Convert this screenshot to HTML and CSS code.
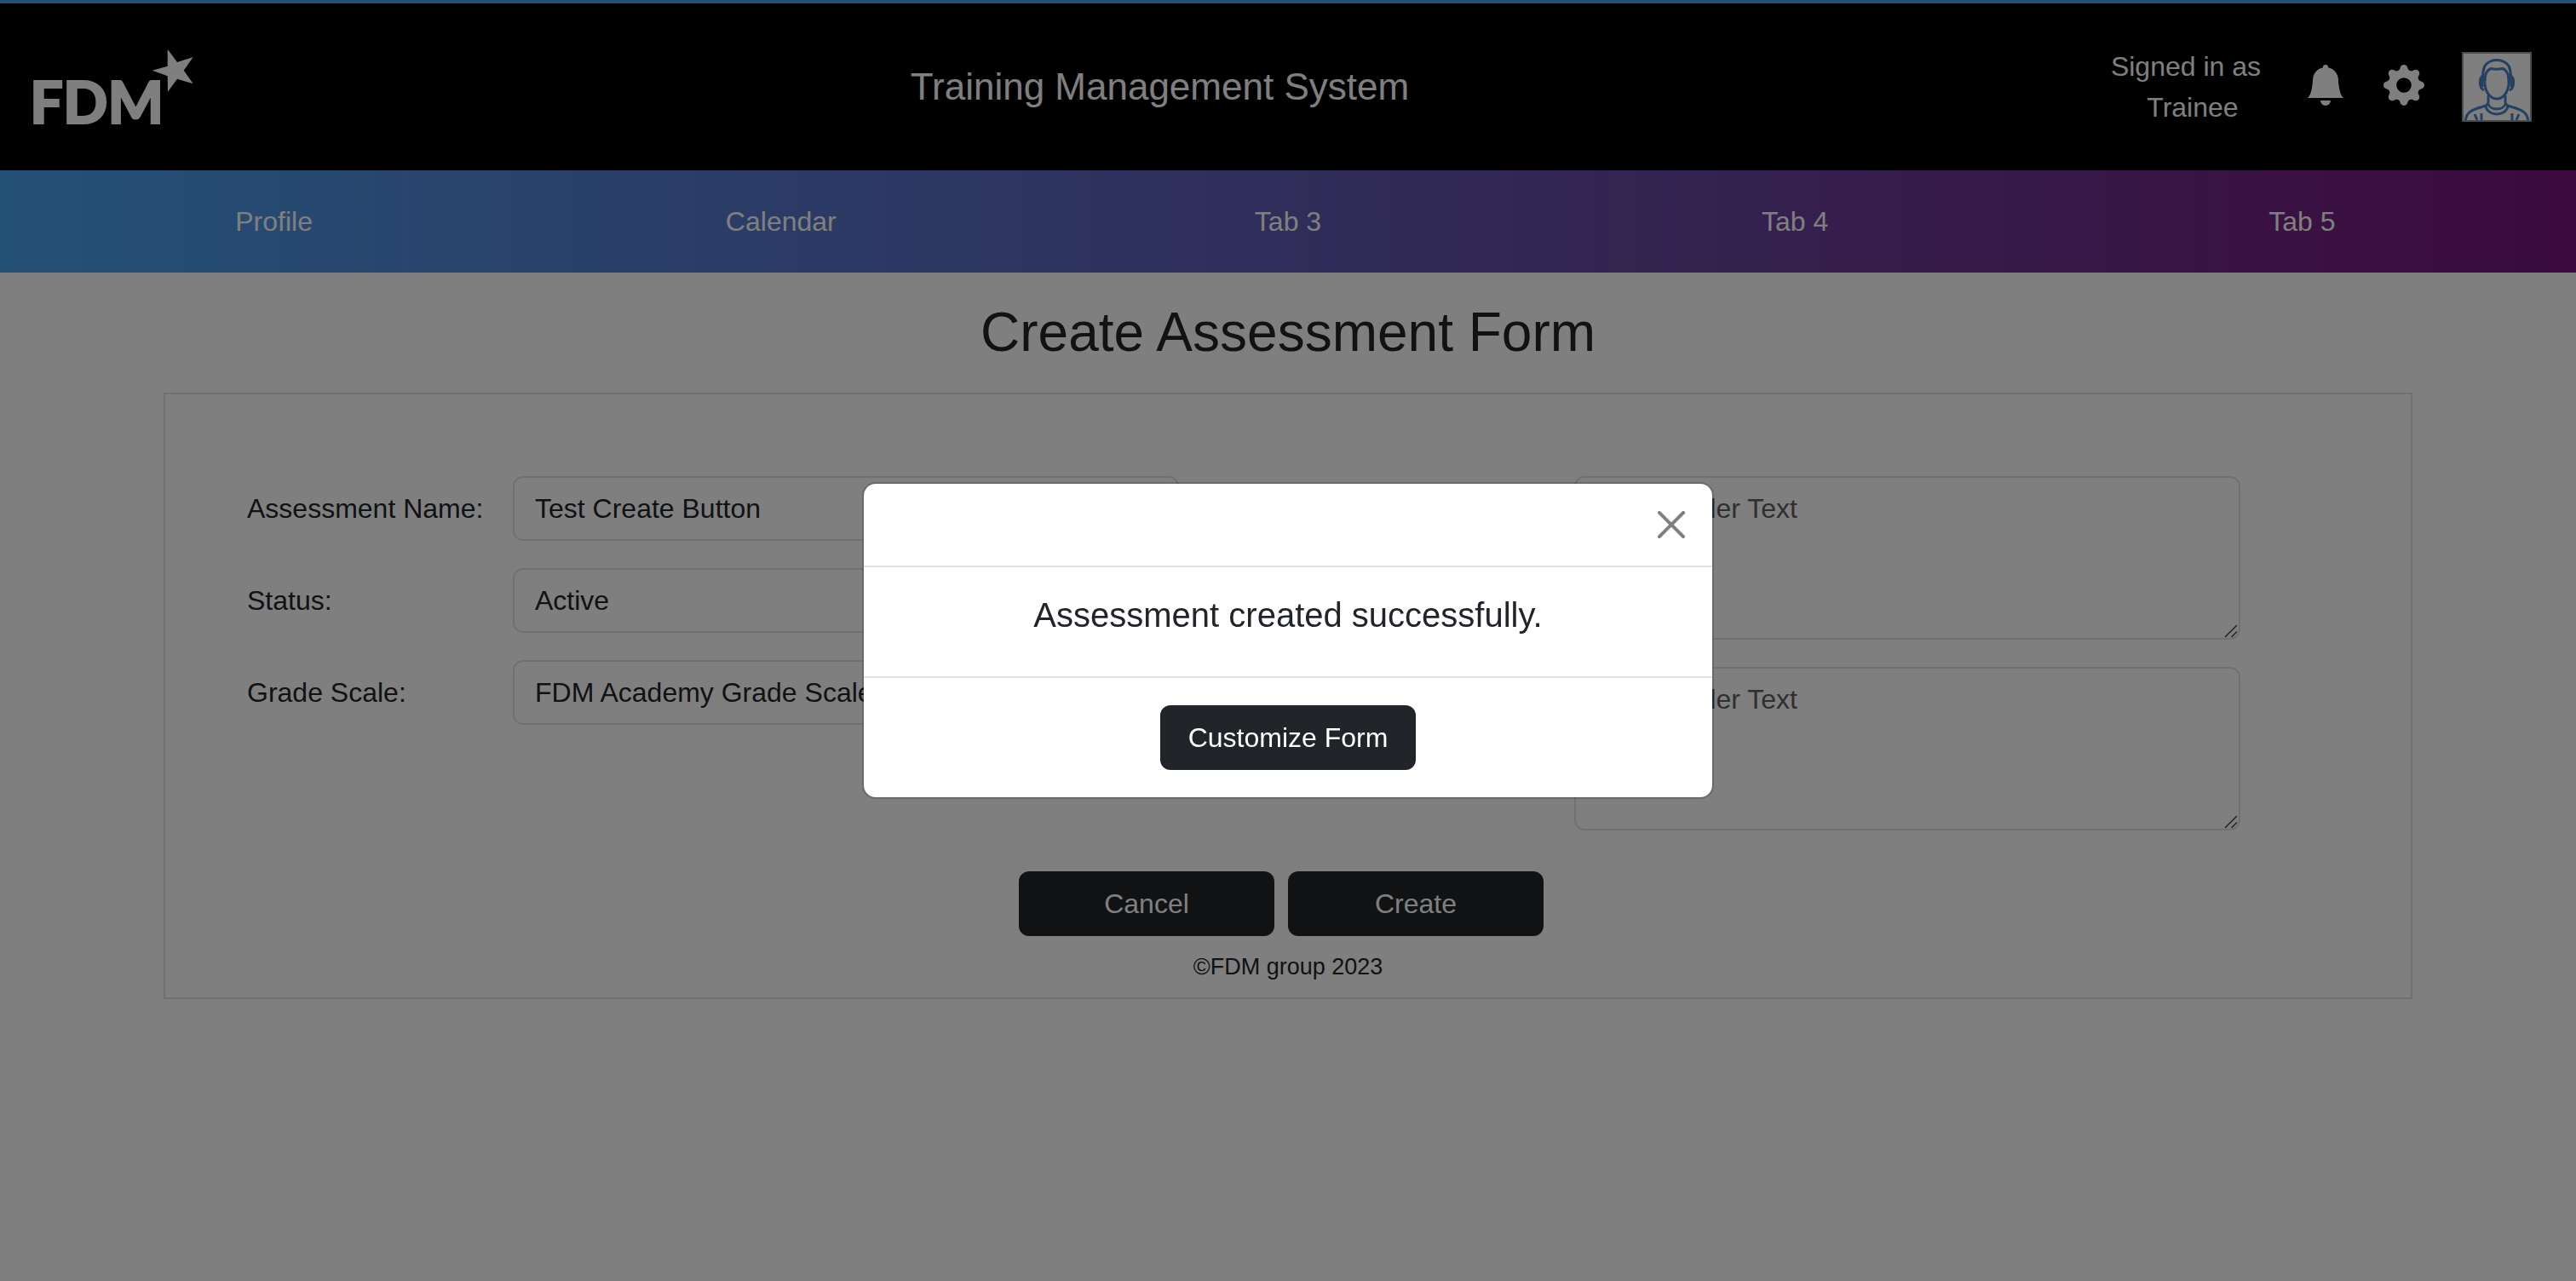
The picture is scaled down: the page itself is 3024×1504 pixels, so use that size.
FILE: index.html
```html
<!DOCTYPE html>
<html lang="en">
<head>
<meta charset="utf-8">
<title>Training Management System</title>
<meta name="viewport" content="width=device-width, initial-scale=1">
<link rel="stylesheet" href="styles.css">
</head>
<body>
<header class="site-header">
  <svg class="logo" viewBox="0 0 205 90" role="img" aria-label="FDM">
    <text class="logo-text" x="-5" y="88">FDM</text>
    <polygon points="156.7,0.7 168,16 186.7,10 175.7,25.7 186.7,41.3 168,35.7 157,50.7 156.7,32.3 138.7,25.7 156.7,20.7"/>
  </svg>
  <div class="site-title">Training Management System</div>
  <div class="account">
    <p class="signed-in">Signed in as<span class="role">Trainee</span></p>
    <button class="icon-button" type="button" aria-label="Notifications">
      <svg class="icon" viewBox="0 0 16 16"><path d="M8 16a2 2 0 0 0 2-2H6a2 2 0 0 0 2 2zm.995-14.901a1 1 0 1 0-1.99 0A5.002 5.002 0 0 0 3 6c0 1.098-.5 6-2 7h14c-1.5-1-2-5.902-2-7 0-2.42-1.72-4.44-4.005-4.901z"/></svg>
    </button>
    <button class="icon-button" type="button" aria-label="Settings">
      <svg class="icon" viewBox="0 0 16 16"><path d="M9.405 1.05c-.413-1.4-2.397-1.4-2.81 0l-.1.34a1.464 1.464 0 0 1-2.105.872l-.31-.17c-1.283-.698-2.686.705-1.987 1.987l.169.311c.446.82.023 1.841-.872 2.105l-.34.1c-1.4.413-1.4 2.397 0 2.81l.34.1a1.464 1.464 0 0 1 .872 2.105l-.17.31c-.698 1.283.705 2.686 1.987 1.987l.311-.169a1.464 1.464 0 0 1 2.105.872l.1.34c.413 1.4 2.397 1.4 2.81 0l.1-.34a1.464 1.464 0 0 1 2.105-.872l.31.17c1.283.698 2.686-.705 1.987-1.987l-.169-.311a1.464 1.464 0 0 1 .872-2.105l.34-.1c1.4-.413 1.4-2.397 0-2.81l-.34-.1a1.464 1.464 0 0 1-.872-2.105l.17-.31c.698-1.283-.705-2.686-1.987-1.987l-.311.169a1.464 1.464 0 0 1-2.105-.872l-.1-.34zM8 10.93a2.929 2.929 0 1 1 0-5.86 2.929 2.929 0 0 1 0 5.858z"/></svg>
    </button>
    <svg class="avatar" viewBox="0 0 82 82" role="img" aria-label="User picture">
      <rect class="avatar-frame" x="1" y="1" width="80" height="80"/>
      <g class="avatar-lines">
        <path d="M24 35C25 27 24 18 29 14C36 8 46 8 53 14C58 18 57 27 58 35"/>
        <path d="M27 38C26 30 28 22 34 19.500C39 20.500 43 20.500 48 19.500C54 22 56 30 55 38C54 48 48 55 41 55C34 55 28 48 27 38Z"/>
        <path class="avatar-shade" d="M26 26V34M56 26V34"/>
        <path d="M25 28C20 30 20 42 26 45M57 28C62 30 62 42 56 45M24 31V41M58 31V41"/>
        <path d="M31 51V59C31 63 27 63.500 22 65C12 68 5 71 4.500 80M51 51V59C51 63 55 63.500 60 65C70 68 77 71 77.500 80"/>
        <path d="M31 61C33 69 49 69 51 61M28 64C31 76 51 76 54 64"/>
        <path d="M15 73L18 80M23 72V80M67 73L64 80M59 72V80"/>
      </g>
    </svg>
  </div>
</header>
<nav class="tabs" aria-label="Main">
  <a class="tab" href="#profile">Profile</a>
  <a class="tab" href="#calendar">Calendar</a>
  <a class="tab" href="#tab3">Tab 3</a>
  <a class="tab" href="#tab4">Tab 4</a>
  <a class="tab" href="#tab5">Tab 5</a>
</nav>
<main class="page">
  <h1 class="page-title">Create Assessment Form</h1>
  <form class="card">
    <div class="columns">
      <div class="column">
        <div class="field">
          <label class="label" for="name">Assessment Name:</label>
          <input class="control" id="name" type="text" value="Test Create Button">
        </div>
        <div class="field">
          <label class="label" for="status">Status:</label>
          <select class="control" id="status"><option>Active</option></select>
        </div>
        <div class="field">
          <label class="label" for="scale">Grade Scale:</label>
          <select class="control" id="scale"><option>FDM Academy Grade Scale</option></select>
        </div>
      </div>
      <div class="column">
        <div class="field">
          <label class="label" for="description">Description:</label>
          <textarea class="control area" id="description" placeholder="Placeholder Text"></textarea>
        </div>
        <div class="field">
          <label class="label" for="comments">Comments:</label>
          <textarea class="control area" id="comments" placeholder="Placeholder Text"></textarea>
        </div>
      </div>
    </div>
    <div class="actions">
      <button class="button" type="button">Cancel</button>
      <button class="button" type="button">Create</button>
    </div>
    <p class="copyright">©FDM group 2023</p>
  </form>
</main>
<div class="backdrop">
  <section class="modal" role="dialog" aria-modal="true" aria-labelledby="message">
    <div class="modal-header">
      <button class="close" type="button" aria-label="Close">
        <svg class="close-icon" viewBox="0 0 16 16"><path d="M.293.293a1 1 0 0 1 1.414 0L8 6.586 14.293.293a1 1 0 1 1 1.414 1.414L9.414 8l6.293 6.293a1 1 0 0 1-1.414 1.414L8 9.414l-6.293 6.293a1 1 0 0 1-1.414-1.414L6.586 8 .293 1.707a1 1 0 0 1 0-1.414z"/></svg>
      </button>
    </div>
    <div class="modal-body">
      <h2 class="message" id="message">Assessment created successfully.</h2>
    </div>
    <div class="modal-footer">
      <button class="button" type="button">Customize Form</button>
    </div>
  </section>
</div>
</body>
</html>
```
FILE: styles.css
```css
* {
  box-sizing: border-box;
}

body {
  margin: 0;
  font-family: "Liberation Sans", Arial, sans-serif;
  font-size: 32px;
  line-height: 48px;
  color: #212529;
  background: #fff;
}

button,
input,
select,
textarea {
  font: inherit;
}

/* Header */

.site-header {
  display: flex;
  align-items: center;
  justify-content: space-between;
  padding: 50px 52px 50px 40px;
  border-top: 4px solid #4aa2f0;
  background: #000;
  color: #fff;
}

.logo {
  width: 205px;
  height: 90px;
  fill: #fff;
  overflow: visible;
}

.logo-text {
  font-family: Lato, sans-serif;
  font-size: 69px;
  font-weight: 900;
  stroke: #fff;
  stroke-width: 2;
}

.site-title {
  font-size: 44px;
  line-height: 54px;
}

.account {
  display: flex;
  align-items: center;
  gap: 44px;
}

.signed-in {
  margin: 0 8px 0 0;
  text-align: center;
}

.role {
  display: block;
  padding-left: 16px;
}

.icon-button {
  padding: 0 0 4px;
  border: 0;
  background: none;
  cursor: pointer;
}

.icon {
  display: block;
  width: 48px;
  height: 48px;
  fill: #fff;
}

.avatar {
  width: 82px;
  height: 82px;
}

.avatar-frame {
  fill: #fff;
  stroke: #999;
  stroke-width: 2;
}

.avatar-lines {
  fill: none;
  stroke: #4a82c4;
  stroke-width: 3;
}

.avatar-shade {
  stroke-width: 5;
}

/* Navigation */

.tabs {
  display: grid;
  grid-template-columns: repeat(5, 1fr);
  padding: 0 24px;
  background: linear-gradient(90deg, #48a2f0, #781478);
}

.tab {
  padding: 36px 0;
  color: #fff;
  text-align: center;
  text-decoration: none;
}

/* Form */

.page {
  max-width: 2640px;
  margin: 0 auto;
  padding: 32px 0;
}

.page-title {
  margin: 0 0 32px;
  font-size: 64px;
  font-weight: 400;
  line-height: 77px;
  text-align: center;
}

.card {
  padding: 96px 96px 0;
  border: 2px solid #dee2e6;
}

.columns {
  display: grid;
  grid-template-columns: 1fr 1fr;
  gap: 48px;
}

.column {
  display: flex;
  flex-direction: column;
  gap: 32px;
  padding-right: 104px;
}

.field {
  display: grid;
  grid-template-columns: 312px 1fr;
  align-items: start;
}

.label {
  padding: 14px 0;
}

.control {
  width: 100%;
  height: 76px;
  padding: 12px 24px;
  border: 2px solid #dee2e6;
  border-radius: 12px;
  background: #fff;
  color: #212529;
  appearance: none;
}

.control::placeholder {
  color: #5a5e62;
}

.area {
  display: block;
  height: 192px;
  resize: none;
  background: #fff url("data:image/svg+xml,%3Csvg xmlns='http://www.w3.org/2000/svg' width='16' height='16'%3E%3Cpath d='M2 15L16 1M9.500 15L16 8.500' stroke='%23444' stroke-width='1.500'/%3E%3C/svg%3E") no-repeat right 2px bottom;
}

.actions {
  display: flex;
  justify-content: center;
  gap: 16px;
  margin: 48px 16px 0 0;
}

.button {
  min-width: 300px;
  padding: 14px 24px;
  border: 0;
  border-radius: 12px;
  background: #212529;
  color: #fff;
  cursor: pointer;
}

.copyright {
  margin: 0;
  padding: 16px 0;
  font-size: 27px;
  line-height: 40px;
  text-align: center;
}

/* Dialog */

.backdrop {
  position: fixed;
  inset: 0;
  display: flex;
  align-items: center;
  justify-content: center;
  background: rgba(0, 0, 0, 0.5);
}

.modal {
  width: 100%;
  max-width: 1000px;
  border: 2px solid rgba(0, 0, 0, 0.175);
  border-radius: 16px;
  background: #fff;
  background-clip: padding-box;
}

.modal-header {
  display: flex;
  justify-content: flex-end;
  padding: 32px;
  border-bottom: 2px solid #dee2e6;
}

.close {
  padding: 0;
  border: 0;
  background: none;
  cursor: pointer;
}

.close-icon {
  display: block;
  width: 32px;
  height: 32px;
  fill: #808080;
}

.modal-body {
  padding: 32px 32px 48px;
  text-align: center;
}

.message {
  margin: 0;
  font-size: 40px;
  font-weight: 400;
  line-height: 48px;
}

.modal-footer {
  display: flex;
  justify-content: center;
  padding: 32px;
  border-top: 2px solid #dee2e6;
}
```
